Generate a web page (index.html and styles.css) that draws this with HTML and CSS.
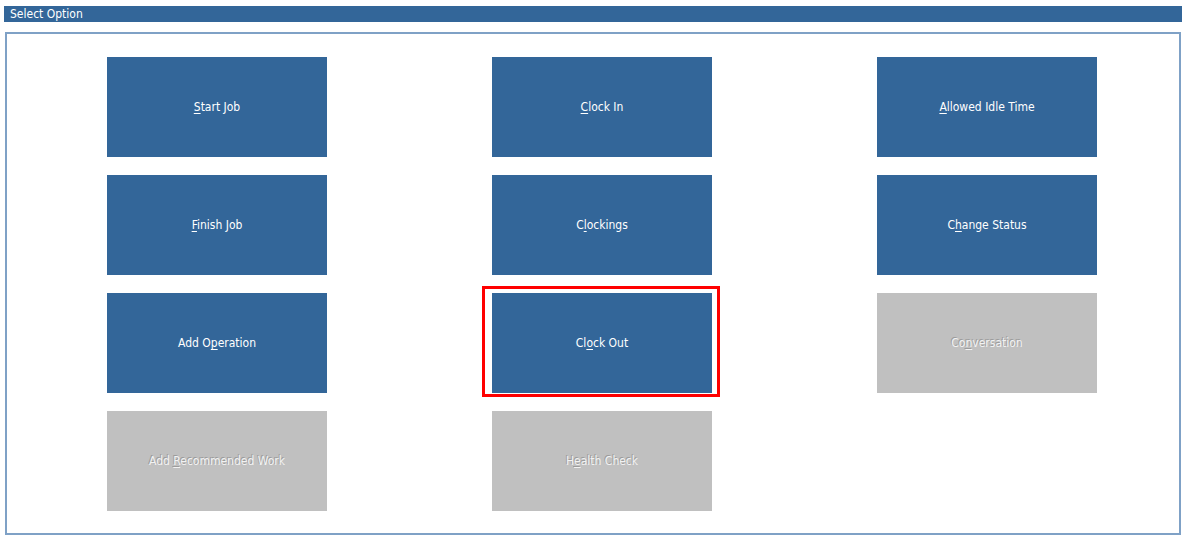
FILE: index.html
```html
<!DOCTYPE html>
<html lang="en">
<head>
    <meta charset="UTF-8">
    <title>Select Option</title>
    <link rel="stylesheet" href="styles.css">
</head>
<body>
    <div class="title-bar">Select Option</div>

    <div class="option-frame">
        <div class="option-grid">
            <button class="option-btn"><u>S</u>tart Job</button>
            <button class="option-btn"><u>C</u>lock In</button>
            <button class="option-btn"><u>A</u>llowed Idle Time</button>

            <button class="option-btn"><u>F</u>inish Job</button>
            <button class="option-btn">C<u>l</u>ockings</button>
            <button class="option-btn">C<u>h</u>ange Status</button>

            <button class="option-btn">Add O<u>p</u>eration</button>
            <button class="option-btn focused">Cl<u>o</u>ck Out</button>
            <button class="option-btn" disabled>Co<u>n</u>versation</button>

            <button class="option-btn" disabled>Add <u>R</u>ecommended Work</button>
            <button class="option-btn" disabled>H<u>e</u>alth Check</button>
        </div>
    </div>
</body>
</html>
```

FILE: styles.css
```css
* {
    margin: 0;
    padding: 0;
    box-sizing: border-box;
}

body {
    font-family: "DejaVu Sans Condensed", "DejaVu Sans", Tahoma, sans-serif;
    font-size: 12px;
    background: #ffffff;
    width: 1184px;
    height: 540px;
    overflow: hidden;
}

.title-bar {
    margin: 6px 2px 0 4px;
    height: 16px;
    line-height: 16px;
    padding-left: 6px;
    background: #336699;
    color: #ffffff;
}

.option-frame {
    margin: 10px 3px 0 5px;
    height: 503px;
    border: 2px solid #7fa1c6;
    padding: 23px 0 0 100px;
}

.option-grid {
    display: grid;
    grid-template-columns: repeat(3, 220px);
    grid-auto-rows: 100px;
    column-gap: 165px;
    row-gap: 18px;
}

.option-btn {
    position: relative;
    border: none;
    background: #336699;
    color: #ffffff;
    font-family: inherit;
    font-size: 12px;
    cursor: pointer;
}

.option-btn u {
    text-underline-offset: 2px;
}

/* focus rectangle round the current option */
.option-btn.focused::after {
    content: "";
    position: absolute;
    left: -10px;
    top: -7px;
    right: -8px;
    bottom: -4px;
    border: 3px solid #ff0000;
}

.option-btn:disabled {
    background: #c0c0c0;
    color: #f2f2f2;
    text-shadow: -1px -1px 0 #9c9c9c;
    cursor: default;
}
```
